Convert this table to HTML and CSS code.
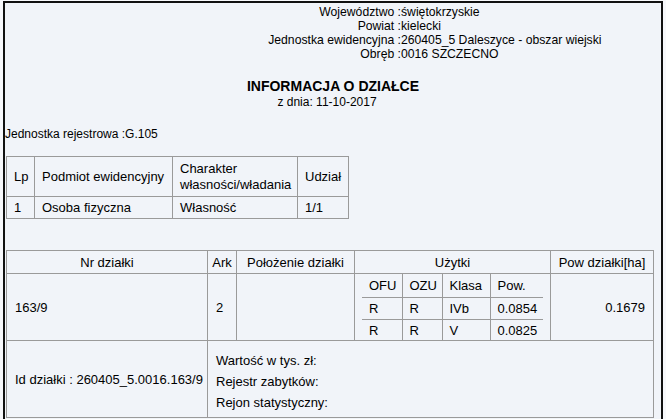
FILE: index.html
```html
<!DOCTYPE html>
<html lang="pl">
<head>
<meta charset="utf-8">
<title>Informacja o działce</title>
<link rel="stylesheet" href="styles.css">
</head>
<body>
<div class="sheet">
  <div class="meta">
    <span class="lbl">Województwo :</span><span class="val">świętokrzyskie</span>
    <span class="lbl">Powiat :</span><span class="val">kielecki</span>
    <span class="lbl">Jednostka ewidencyjna :</span><span class="val">260405_5 Daleszyce - obszar wiejski</span>
    <span class="lbl">Obręb :</span><span class="val">0016 SZCZECNO</span>
  </div>
  <h1 class="title">INFORMACJA O DZIAŁCE</h1>
  <p class="date">z dnia: 11-10-2017</p>
  <p class="unit">Jednostka rejestrowa :G.105</p>

  <table class="owners">
    <colgroup><col class="o1"><col class="o2"><col class="o3"><col class="o4"></colgroup>
    <tr class="oh"><td>Lp</td><td>Podmiot ewidencyjny</td><td>Charakter<br>własności/władania</td><td>Udział</td></tr>
    <tr class="od"><td>1</td><td>Osoba fizyczna</td><td>Własność</td><td>1/1</td></tr>
  </table>

  <table class="parcel">
    <colgroup><col class="p1"><col class="p2"><col class="p3"><col class="p4"><col class="p5"></colgroup>
    <tr class="ph"><th>Nr działki</th><th>Ark</th><th>Położenie działki</th><th>Użytki</th><th>Pow działki[ha]</th></tr>
    <tr class="pb">
      <td>163/9</td>
      <td>2</td>
      <td></td>
      <td class="uz">
        <table class="uzytki">
          <colgroup><col class="u1"><col class="u2"><col class="u3"><col class="u4"></colgroup>
          <tr class="uh"><td>OFU</td><td>OZU</td><td>Klasa</td><td>Pow.</td></tr>
          <tr class="ur1"><td>R</td><td>R</td><td>IVb</td><td>0.0854</td></tr>
          <tr class="ur2"><td>R</td><td>R</td><td>V</td><td>0.0825</td></tr>
        </table>
      </td>
      <td class="num">0.1679</td>
    </tr>
    <tr class="pi">
      <td>Id działki : 260405_5.0016.163/9</td>
      <td colspan="4" class="extra">
        <div class="xl">Wartość w tys. zł:</div>
        <div class="xl">Rejestr zabytków:</div>
        <div class="xl">Rejon statystyczny:</div>
      </td>
    </tr>
  </table>
</div>
</body>
</html>
```

FILE: styles.css
```css
html, body {
  margin: 0;
  padding: 0;
}
body {
  background: #f7f8fb;
  font-family: "Liberation Sans", Arial, sans-serif;
  color: #000;
}
.sheet {
  margin: 1px 3px 0;
  border: 2px solid #111;
  border-bottom: 0;
  background: #f1f4f9;
  min-height: 440px;
  box-sizing: border-box;
}
.meta {
  display: grid;
  grid-template-columns: 141px auto;
  margin-left: 255px;
  padding-top: 1.5px;
  font-size: 12.2px;
  line-height: 14.2px;
}
.lbl { text-align: right; }
.title {
  margin: 18px 0 0;
  font-size: 14px;
  line-height: 15px;
  font-weight: bold;
  text-align: center;
}
.date {
  margin: 0;
  padding-top: 1px;
  padding-right: 12px;
  font-size: 12px;
  line-height: 14px;
  text-align: center;
}
.unit {
  margin: 19px 0 0;
  font-size: 12px;
  line-height: 13px;
}
table {
  border-collapse: collapse;
  font-size: 13px;
  table-layout: fixed;
}
td, th {
  padding: 0;
  font-weight: normal;
  white-space: nowrap;
}

/* owners table */
.owners {
  margin: 15px 0 0 1px;
  width: 342px;
  border: 1px solid #6a6a6a;
}
.o1 { width: 28px; }
.o2 { width: 138px; }
.o3 { width: 125px; }
.o4 { width: 51px; }
.owners td {
  border: 1px solid #9a9a9a;
  padding: 0 7px;
  text-align: left;
  vertical-align: middle;
  line-height: 16px;
}
.oh td { height: 39px; }
.od td { height: 21px; }

/* parcel table */
.parcel {
  margin: 31px 0 0 1px;
  width: 647px;
  border: 1px solid #6a6a6a;
}
.p1 { width: 201px; }
.p2 { width: 29px; }
.p3 { width: 118px; }
.p4 { width: 196px; }
.p5 { width: 103px; }
.parcel > tbody > tr > td,
.parcel > tbody > tr > th {
  border: 1px solid #9a9a9a;
  padding: 0 0 0 8px;
  text-align: left;
  vertical-align: middle;
}
.parcel > tbody > tr > th {
  padding: 0;
  text-align: center;
  height: 22px;
}
.parcel > tbody > tr > td.uz {
  padding: 0 7px;
}
.parcel > tbody > tr > td.num {
  padding: 0 8px 0 0;
  text-align: right;
}
.pi > td { height: 72px; }
.parcel > tbody > tr > td.extra { padding-top: 4px; }
.xl { line-height: 21px; }

/* nested land-use table */
.uzytki {
  width: 181px;
  border: 0;
}
.u1 { width: 40px; }
.u2 { width: 40px; }
.u3 { width: 48px; }
.u4 { width: 53px; }
.uzytki td {
  padding: 0 7px;
  border: 0;
  border-left: 1px solid #9a9a9a;
  border-top: 1px solid #9a9a9a;
  text-align: left;
  vertical-align: middle;
}
.uzytki td:first-child { border-left: 0; }
.uzytki tr:first-child td { border-top: 0; }
.uh td { height: 23px; }
.ur1 td { height: 21px; }
.ur2 td { height: 20px; }
```
